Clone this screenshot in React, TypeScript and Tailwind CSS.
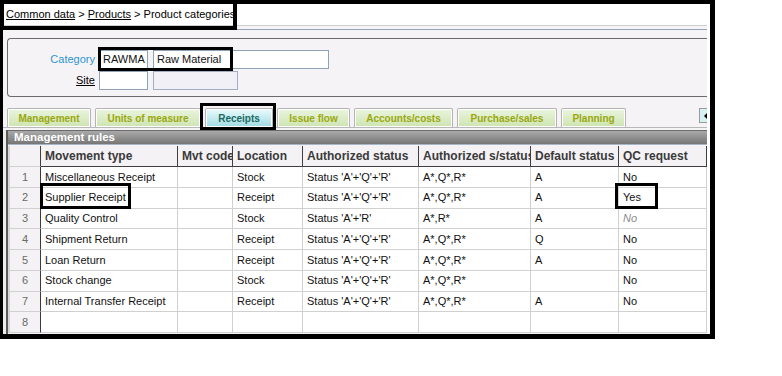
import React from 'react';

const tabs = [
  { label: 'Management', w: 'w-[84px]', active: false },
  { label: 'Units of measure', w: 'w-[106px]', active: false },
  { label: 'Receipts', w: 'w-[68px]', active: true },
  { label: 'Issue flow', w: 'w-[73px]', active: false },
  { label: 'Accounts/costs', w: 'w-[99px]', active: false },
  { label: 'Purchase/sales', w: 'w-[100px]', active: false },
  { label: 'Planning', w: 'w-[65px]', active: false },
];

const headers = ['', 'Movement type', 'Mvt code', 'Location', 'Authorized status', 'Authorized s/status', 'Default status', 'QC request'];

const rows = [
  ['Miscellaneous Receipt', '', 'Stock', "Status 'A'+'Q'+'R'", 'A*,Q*,R*', 'A', 'No'],
  ['Supplier Receipt', '', 'Receipt', "Status 'A'+'Q'+'R'", 'A*,Q*,R*', 'A', 'Yes'],
  ['Quality Control', '', 'Stock', "Status 'A'+'R'", 'A*,R*', 'A', 'No'],
  ['Shipment Return', '', 'Receipt', "Status 'A'+'Q'+'R'", 'A*,Q*,R*', 'Q', 'No'],
  ['Loan Return', '', 'Receipt', "Status 'A'+'Q'+'R'", 'A*,Q*,R*', 'A', 'No'],
  ['Stock change', '', 'Stock', "Status 'A'+'Q'+'R'", 'A*,Q*,R*', '', 'No'],
  ['Internal Transfer Receipt', '', 'Receipt', "Status 'A'+'Q'+'R'", 'A*,Q*,R*', 'A', 'No'],
  ['', '', '', '', '', '', ''],
];

const Tab = ({ label, w, active }: { label: string; w: string; active: boolean }) => (
  <div
    className={`${w} h-[19px] border border-b-0 border-[#b4b4b4] rounded-t-[2px] shadow-[inset_0_0_0_1px_#ffffff] flex items-center justify-center text-[10px] font-bold ${
      active
        ? 'bg-gradient-to-b from-[#eafbfc] to-[#9fdbe4] text-[#1d6a62]'
        : 'bg-gradient-to-b from-[#ebf5df] to-[#cde4b1] text-[#9aa80e]'
    }`}
  >
    {label}
  </div>
);

export default function App() {
  return (
    <div className="relative w-[782px] h-[376px] bg-white font-['Liberation_Sans',Arial,sans-serif] text-[#111]">
      <div className="w-[715px] h-[339px] border-t-4 border-l-[3px] border-r-[5px] border-b-[5px] border-black overflow-hidden">
        <div className="h-full border-r-[3px] border-white bg-[#f5f3f6] flex flex-col">
          {/* breadcrumb */}
          <div className="h-[22px] shrink-0 bg-white border-b border-[#cfcfcf] flex items-center pl-[3px] text-[11px] text-black">
            <span className="underline">Common data</span>
            <span>&nbsp;&gt;&nbsp;</span>
            <span className="underline">Products</span>
            <span>&nbsp;&gt; Product categories</span>
          </div>
          <div className="mt-[3px] h-px shrink-0 bg-[#94a5ba]" />

          {/* header group box */}
          <div className="mt-[8px] ml-[4px] h-[59px] shrink-0 border-l border-t border-b border-[#6b6b6b] rounded-l-[4px] pt-[11px] flex flex-col gap-[2px] text-[11px]">
            <div className="flex items-center h-[19px]">
              <div className="w-[87px] text-right text-[#2f95d0]">Category</div>
              <div className="ml-[4px] w-[49px] h-[19px] border border-[#8fa3b8] bg-white pl-[3px] flex items-center">RAWMA</div>
              <div className="ml-[5px] w-[176px] h-[19px] border border-[#8fa3b8] bg-white pl-[3px] flex items-center">Raw Material</div>
            </div>
            <div className="flex items-center h-[19px]">
              <div className="w-[87px] text-right underline text-black">Site</div>
              <div className="ml-[4px] w-[49px] h-[19px] border border-[#8fa3b8] bg-white" />
              <div className="ml-[5px] w-[85px] h-[19px] border border-[#9fb0c4] bg-[#f0f0f6]" />
            </div>
          </div>

          {/* tabs */}
          <div className="mt-[11px] h-[20px] shrink-0 border-b border-[#b8b8b8] flex items-end">
            <div className="ml-[4px] flex gap-[4px] items-end">
              {tabs.map((t) => (
                <Tab key={t.label} {...t} />
              ))}
            </div>
            <div className="ml-auto mb-[4px] w-[8px] h-[15px] border-l border-t border-b border-[#9a9a9a] bg-[#d6f1f2] flex items-center justify-end">
              <div className="w-0 h-0 border-y-[3px] border-y-transparent border-r-[3px] border-r-black" />
            </div>
          </div>

          {/* management rules */}
          <div className="mt-[2px] flex-1 border-l-[3px] border-[#ececec]">
            <div className="h-full border-l-2 border-[#5a5a5a]">
              <div className="h-[14px] bg-gradient-to-b from-[#aaaaaa] to-[#767676] border-t border-[#6a6a6a] flex items-center pl-[6px] text-white text-[11.5px] font-bold">
                Management rules
              </div>
              <div className="h-[2px] border-t border-[#a6b6c6]" />
              <div className="border-l-2 border-[#d6d6d6]">
                <div className="grid grid-cols-[31px_137px_55px_70px_116px_112px_88px_88px]">
                  {headers.map((h, i) => (
                    <div
                      key={i}
                      className={`h-[21px] flex items-center whitespace-nowrap overflow-hidden pl-[4px] text-[12px] font-bold text-[#3a3a3a] bg-[#f4f2f5] border-r border-[#3f3f3f] ${
                        i === 0 ? 'border-b border-b-[#d0d0d0]' : 'border-b'
                      }`}
                    >
                      {h}
                    </div>
                  ))}
                  {rows.map((r, ri) => (
                    <React.Fragment key={ri}>
                      <div className="h-[20.75px] flex items-center justify-center bg-[#f4f2f5] text-[11px] text-[#6a6a6a] border-r border-r-[#3a3a3a] border-b border-b-[#d0d0d0]">
                        {ri + 1}
                      </div>
                      {r.map((c, ci) => (
                        <div
                          key={ci}
                          className={`h-[20.75px] flex items-center whitespace-nowrap overflow-hidden pl-[4px] text-[11px] bg-white border-r border-b border-[#d0d0d0] ${
                            ri === 2 && ci === 6 ? 'italic text-[#8a8a8a]' : ''
                          }`}
                        >
                          {c}
                        </div>
                      ))}
                    </React.Fragment>
                  ))}
                </div>
              </div>
            </div>
          </div>
        </div>
      </div>

      {/* highlight boxes */}
      <div className="absolute left-0 top-0 w-[237px] h-[30px] border-4 border-black pointer-events-none" />
      <div className="absolute left-[98px] top-[47px] w-[135px] h-[24px] border-[3px] border-black pointer-events-none" />
      <div className="absolute left-[200px] top-[103px] w-[76px] h-[27px] border-[3px] border-black pointer-events-none" />
      <div className="absolute left-[40px] top-[183px] w-[91px] h-[26px] border-[3px] border-black pointer-events-none" />
      <div className="absolute left-[615px] top-[183px] w-[43px] h-[26px] border-[3px] border-black pointer-events-none" />
    </div>
  );
}
